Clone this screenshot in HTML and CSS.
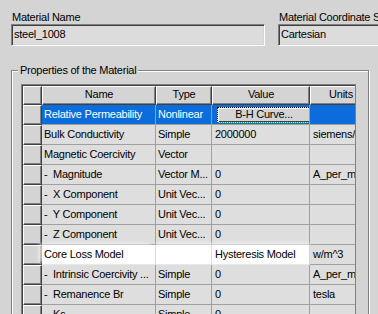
FILE: index.html
```html
<!DOCTYPE html>
<html>
<head>
<meta charset="utf-8">
<link rel="stylesheet" href="styles.css">
</head>
<body>
<div class="fields">
  <div class="field field-name">
    <label class="lbl">Material Name</label>
    <div class="textbox">steel_1008</div>
  </div>
  <div class="field field-coord">
    <label class="lbl">Material Coordinate System Type</label>
    <div class="textbox">Cartesian</div>
  </div>
</div>
<fieldset class="group">
  <legend class="legend">Properties of the Material</legend>
  <div class="grid">
    <div class="grid-inner">
      <div class="row head">
        <div class="cell rh"></div>
        <div class="cell">Name</div>
        <div class="cell">Type</div>
        <div class="cell">Value</div>
        <div class="cell">Units</div>
      </div>
      <div class="row sel">
        <div class="cell rh"></div>
        <div class="cell name">Relative Permeability</div>
        <div class="cell">Nonlinear</div>
        <div class="cell val btn-cell"><div class="btn">B-H Curve...</div></div>
        <div class="cell val"></div>
      </div>
      <div class="row">
        <div class="cell rh"></div>
        <div class="cell name">Bulk Conductivity</div>
        <div class="cell">Simple</div>
        <div class="cell val">2000000</div>
        <div class="cell val">siemens/m</div>
      </div>
      <div class="row">
        <div class="cell rh"></div>
        <div class="cell name">Magnetic Coercivity</div>
        <div class="cell">Vector</div>
        <div class="cell val"></div>
        <div class="cell val"></div>
      </div>
      <div class="row">
        <div class="cell rh"></div>
        <div class="cell name">-  Magnitude</div>
        <div class="cell">Vector M...</div>
        <div class="cell val">0</div>
        <div class="cell val">A_per_meter</div>
      </div>
      <div class="row">
        <div class="cell rh"></div>
        <div class="cell name">-  X Component</div>
        <div class="cell">Unit Vec...</div>
        <div class="cell val">0</div>
        <div class="cell val"></div>
      </div>
      <div class="row">
        <div class="cell rh"></div>
        <div class="cell name">-  Y Component</div>
        <div class="cell">Unit Vec...</div>
        <div class="cell val">0</div>
        <div class="cell val"></div>
      </div>
      <div class="row">
        <div class="cell rh"></div>
        <div class="cell name">-  Z Component</div>
        <div class="cell">Unit Vec...</div>
        <div class="cell val">0</div>
        <div class="cell val"></div>
      </div>
      <div class="row edit">
        <div class="cell rh"></div>
        <div class="cell name white">Core Loss Model</div>
        <div class="cell white"></div>
        <div class="cell val white">Hysteresis Model</div>
        <div class="cell val">w/m^3</div>
      </div>
      <div class="row">
        <div class="cell rh"></div>
        <div class="cell name">-  Intrinsic Coercivity ...</div>
        <div class="cell">Simple</div>
        <div class="cell val">0</div>
        <div class="cell val">A_per_meter</div>
      </div>
      <div class="row">
        <div class="cell rh"></div>
        <div class="cell name">-  Remanence Br</div>
        <div class="cell">Simple</div>
        <div class="cell val">0</div>
        <div class="cell val">tesla</div>
      </div>
      <div class="row">
        <div class="cell rh"></div>
        <div class="cell name">-  Kc</div>
        <div class="cell">Simple</div>
        <div class="cell val">0</div>
        <div class="cell val"></div>
      </div>
    </div>
  </div>
</fieldset>
</body>
</html>
```

FILE: styles.css
```css
html, body {
  margin: 0;
  overflow: hidden;
}
body {
  width: 378px;
  height: 314px;
  background: #d4d4d4;
  font-family: "Liberation Sans", Arial, sans-serif;
  font-size: 11px;
  letter-spacing: -0.25px;
  color: #000;
}
.fields {
  display: flex;
  gap: 13px;
  padding: 11px 0 0 11px;
}
.field {
  display: flex;
  flex-direction: column;
  flex-shrink: 0;
}
.field-name { width: 254px; }
.field-coord { width: 200px; }
.lbl {
  line-height: 13px;
  padding-left: 1px;
  white-space: nowrap;
}
.textbox {
  box-sizing: border-box;
  height: 22px;
  border: 1px solid;
  border-color: #808080 #ffffff #ffffff #808080;
  box-shadow: inset 1px 1px 0 #404040, inset -1px -1px 0 #d4d4d4;
  background: #dcdcdc;
  padding: 1px 2px 2px 2px;
  line-height: 17px;
  white-space: nowrap;
}
.group {
  box-sizing: border-box;
  width: 358px;
  height: 270px;
  min-width: 0;
  margin: 18px 0 0 11px;
  padding: 7px 0 0 9px;
  border: 1px solid #808080;
  box-shadow: inset 1px 1px 0 #ffffff, 1px 1px 0 #ffffff;
}
.legend {
  padding: 0 2px;
  margin-left: -3px;
  line-height: 13px;
  background: #d4d4d4;
}
.grid {
  box-sizing: border-box;
  width: 335px;
  height: 240px;
  overflow: hidden;
  border-top: 1px solid #808080;
  border-left: 1px solid #808080;
  border-right: 1px solid #808080;
}
.grid-inner {
  border-top: 1px solid #404040;
  border-left: 1px solid #404040;
}
.row {
  display: grid;
  grid-template-columns: 19px 114px 56px 98px 62px;
  width: 349px;
}
.cell {
  box-sizing: border-box;
  height: 20px;
  border-right: 1px solid #a0a0a0;
  border-bottom: 1px solid #a0a0a0;
  background: #dedede;
  line-height: 19px;
  padding-left: 2px;
  white-space: pre;
  overflow: hidden;
}
.cell.val { padding-left: 3px; }
.cell.rh,
.head .cell {
  background: #d4d4d4;
  border-top: 1px solid #ffffff;
  border-left: 1px solid #ffffff;
  border-right: 1px solid #404040;
  border-bottom: 1px solid #404040;
  box-shadow: inset -1px -1px 0 #808080;
  padding: 0;
}
.head .cell {
  height: 19px;
  line-height: 15px;
  text-align: center;
}
.sel .cell:not(.rh) {
  background: #0c6cdc;
  color: #ffffff;
}
.btn-cell { padding: 0; }
.btn {
  box-sizing: border-box;
  height: 16px;
  width: 94px;
  margin: 2px 0 0 2px;
  border: 1px dotted #000000;
  border-bottom-color: #2f9a4a;
  box-shadow: inset 1px 1px 0 #ffffff, inset -1px -1px 0 #404040;
  background: #d4d4d4;
  color: #000;
  text-align: center;
  line-height: 12px;
}
.cell.white {
  background: #ffffff;
  border-right-color: #d4d4d4;
  border-bottom-color: #e8e8e8;
  box-shadow: 0 -2px 3px rgba(255, 255, 255, 0.6);
}
.cell.name.white {
  box-shadow: -4px -2px 4px -1px rgba(255, 255, 255, 0.7);
}
```
